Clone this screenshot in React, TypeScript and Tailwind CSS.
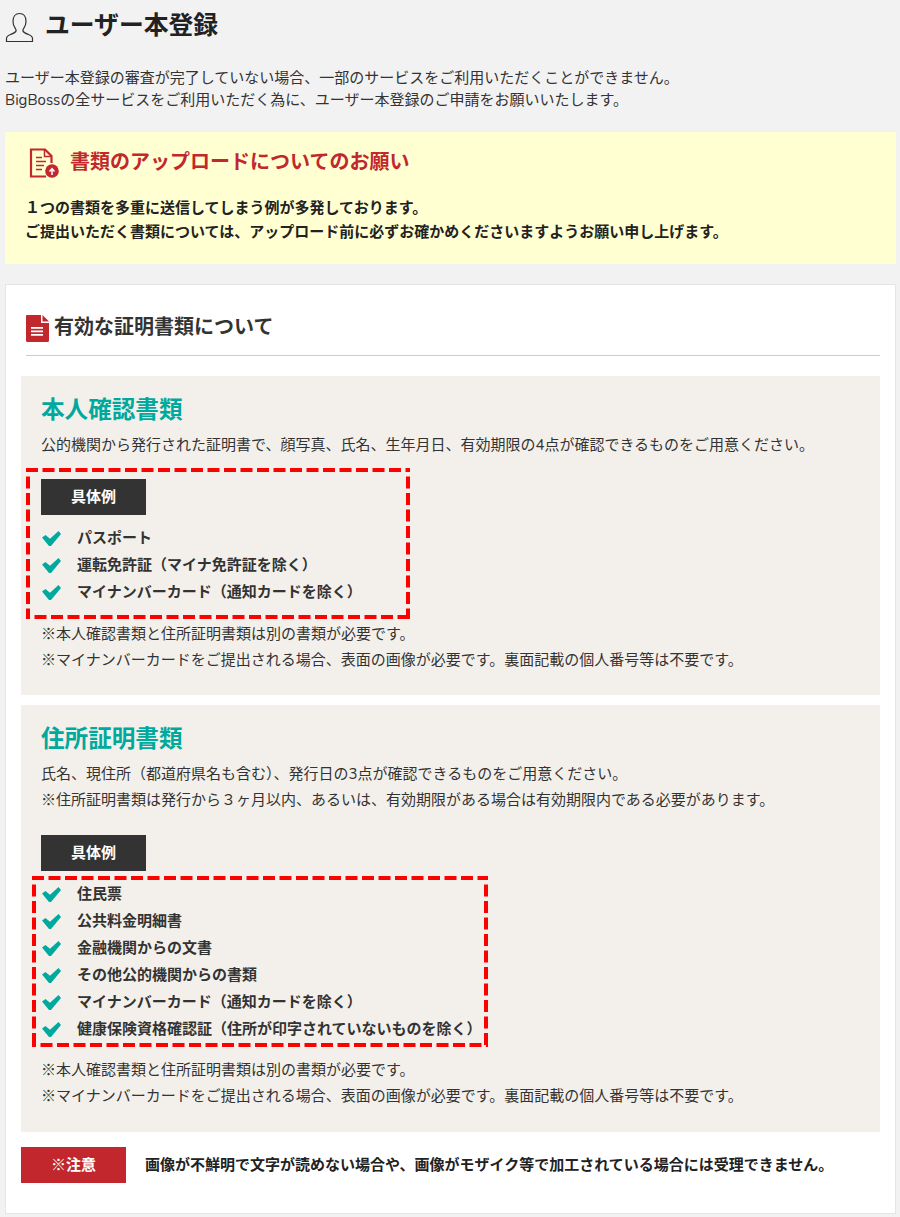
const FONT = "font-['Nunito','Lato','Noto_Sans_CJK_JP',sans-serif]"

function UserIcon() {
  return (
    <svg width="29" height="31" viewBox="0 0 28 31" fill="none" stroke="#333" strokeWidth="1.2" className="shrink-0">
      <path d="M1 29.500v-3c0-2 1.500-3 4-4 3-1.200 5-1.800 5.500-3.500.3-1-.2-2-1-3.200C8.300 14 7.500 12 7.500 9.500 7.500 4.500 10 1.500 14 1.500s6.500 3 6.500 8c0 2.500-.8 4.500-2 6.300-.8 1.200-1.300 2.200-1 3.200.5 1.700 2.500 2.300 5.500 3.500 2.500 1 4 2 4 4v3z" />
    </svg>
  )
}

function UploadDocIcon() {
  return (
    <svg width="30" height="30" viewBox="0 0 30 30" className="shrink-0">
      <path d="M17 28.500H2V1.500h14l6.500 6.500v7" fill="none" stroke="#c1272d" strokeWidth="2.200" />
      <path d="M15.500 2v6.500H22" fill="none" stroke="#c1272d" strokeWidth="1.500" />
      <path d="M7 9.500h6M7 13.500h10M7 17.500h8M7 21.500h6" stroke="#c1272d" strokeWidth="1.600" />
      <circle cx="23" cy="23" r="6.800" fill="#c1272d" />
      <path d="M23 27v-5.500M20.500 23.500l2.500-2.800 2.500 2.800" fill="none" stroke="#fff" strokeWidth="1.500" />
    </svg>
  )
}

function DocIcon() {
  return (
    <svg width="23" height="27" viewBox="0 0 23 27" className="shrink-0">
      <path d="M1 0h14v8h8v17.500a1.500 1.500 0 0 1-1.500 1.500h-20A1.500 1.500 0 0 1 0 25.500V1a1 1 0 0 1 1-1z" fill="#c1272d" />
      <path d="M16.500 0l6.500 6.500h-6.500z" fill="#c1272d" />
      <path d="M5 12h12v1.800H5zM5 15.500h12v1.800H5zM5 19h12v1.800H5z" fill="#fff" />
    </svg>
  )
}

function Check() {
  return (
    <svg width="19" height="15" viewBox="0 0 19 15" className="shrink-0">
      <path d="M0 6.500L3.500 4 8 7.800 16.500 0 19 3 9 15H7z" fill="#00a99d" />
    </svg>
  )
}

function Badge({ label, color }: { label: string; color: string }) {
  return (
    <div className={`flex h-9 w-[105px] shrink-0 items-center justify-center text-[15px] font-bold text-white ${color}`}>
      {label}
    </div>
  )
}

function CheckList({ items }: { items: string[] }) {
  return (
    <ul>
      {items.map((item) => (
        <li key={item} className="flex h-[27px] items-center gap-4 pl-[1px] text-[15px] font-bold text-[#333]">
          <span className="pt-[2px]"><Check /></span>
          {item}
        </li>
      ))}
    </ul>
  )
}

// red annotation box laid over the page, each side dashed on its own like a border
function DashedBox({ className, w, h }: { className: string; w: number; h: number }) {
  const dash = { stroke: '#f00', strokeWidth: 4, strokeDasharray: '12 4.5' }
  return (
    <svg width={w} height={h} className={`absolute ${className}`}>
      <line x1={0} y1={2} x2={w} y2={2} {...dash} />
      <line x1={0} y1={h - 2} x2={w} y2={h - 2} {...dash} strokeDashoffset={8} />
      <line x1={2} y1={0} x2={2} y2={h} {...dash} strokeDashoffset={8} />
      <line x1={w - 2} y1={0} x2={w - 2} y2={h} {...dash} strokeDashoffset={8} />
    </svg>
  )
}

const IDENTITY_ITEMS = ['パスポート', '運転免許証（マイナ免許証を除く）', 'マイナンバーカード（通知カードを除く）']
const ADDRESS_ITEMS = [
  '住民票',
  '公共料金明細書',
  '金融機関からの文書',
  'その他公的機関からの書類',
  'マイナンバーカード（通知カードを除く）',
  '健康保険資格確認証（住所が印字されていないものを除く）',
]

function Notes() {
  return (
    <div className="text-[15px] leading-[26px] text-[#333]">
      <p>※本人確認書類と住所証明書類は別の書類が必要です。</p>
      <p>※マイナンバーカードをご提出される場合、表面の画像が必要です。裏面記載の個人番号等は不要です。</p>
    </div>
  )
}

export default function App() {
  return (
    <div className={`relative h-[1217px] overflow-hidden bg-[#f2f2f2] pl-[5px] pr-[4px] ${FONT}`}>
      <div className="flex h-[54px] items-center gap-[11px] text-[#222]">
        <UserIcon />
        <h1 className="text-[24.8px] font-bold">ユーザー本登録</h1>
      </div>
      <p className="mt-[13px] text-[15px] leading-[22px] text-[#333]">
        ユーザー本登録の審査が完了していない場合、一部のサービスをご利用いただくことができません。
        <br />
        BigBossの全サービスをご利用いただく為に、ユーザー本登録のご申請をお願いいたします。
      </p>

      <div className="mt-[21px] h-[132px] bg-[#ffffd1] pl-[20px] pt-[16px]">
        <div className="flex items-center gap-[11px] pl-[4px]">
          <UploadDocIcon />
          <h2 className="text-xl font-bold text-[#c1272d]">書類のアップロードについてのお願い</h2>
        </div>
        <p className="mt-[18px] text-[15px] font-bold leading-6 text-[#222]">
          １つの書類を多重に送信してしまう例が多発しております。
          <br />
          ご提出いただく書類については、アップロード前に必ずお確かめくださいますようお願い申し上げます。
        </p>
      </div>

      <div className="mt-5 h-[930px] border border-[#e5e5e5] bg-white px-[15px]">
        <div className="ml-[5px] flex h-[71px] items-center gap-[5px] border-b border-[#ccc] pt-4">
          <DocIcon />
          <h2 className="text-xl font-bold text-[#333]">有効な証明書類について</h2>
        </div>

        <section className="mt-5 h-[319px] bg-[#f3f0eb] px-[20px] pt-[17px]">
          <h3 className="text-[23.6px] font-bold text-[#00a99d]">本人確認書類</h3>
          <p className="mt-[4px] text-[15px] leading-[26px] text-[#333]">
            公的機関から発行された証明書で、顔写真、氏名、生年月日、有効期限の4点が確認できるものをご用意ください。
          </p>
          <div className="mt-[21px]"><Badge label="具体例" color="bg-[#333]" /></div>
          <div className="mt-[9px]"><CheckList items={IDENTITY_ITEMS} /></div>
          <div className="mt-[16px]"><Notes /></div>
        </section>

        <section className="mt-[10px] h-[427px] bg-[#f3f0eb] px-[20px] pt-[17px]">
          <h3 className="text-[23.6px] font-bold text-[#00a99d]">住所証明書類</h3>
          <p className="mt-[4px] text-[15px] leading-[26px] text-[#333]">
            氏名、現住所（都道府県名も含む）、発行日の3点が確認できるものをご用意ください。
            <br />
            ※住所証明書類は発行から３ヶ月以内、あるいは、有効期限がある場合は有効期限内である必要があります。
          </p>
          <div className="mt-[22px]"><Badge label="具体例" color="bg-[#333]" /></div>
          <div className="mt-[9px]"><CheckList items={ADDRESS_ITEMS} /></div>
          <div className="mt-[15px]"><Notes /></div>
        </section>

        <div className="mt-[15px] flex items-center gap-[19px]">
          <Badge label="※注意" color="bg-[#c1272d]" />
          <p className="text-[15px] font-bold text-[#222]">
            画像が不鮮明で文字が読めない場合や、画像がモザイク等で加工されている場合には受理できません。
          </p>
        </div>
      </div>

      <DashedBox className="left-[26px] top-[468px]" w={384} h={151} />
      <DashedBox className="left-[32px] top-[876px]" w={456} h={171} />
    </div>
  )
}
